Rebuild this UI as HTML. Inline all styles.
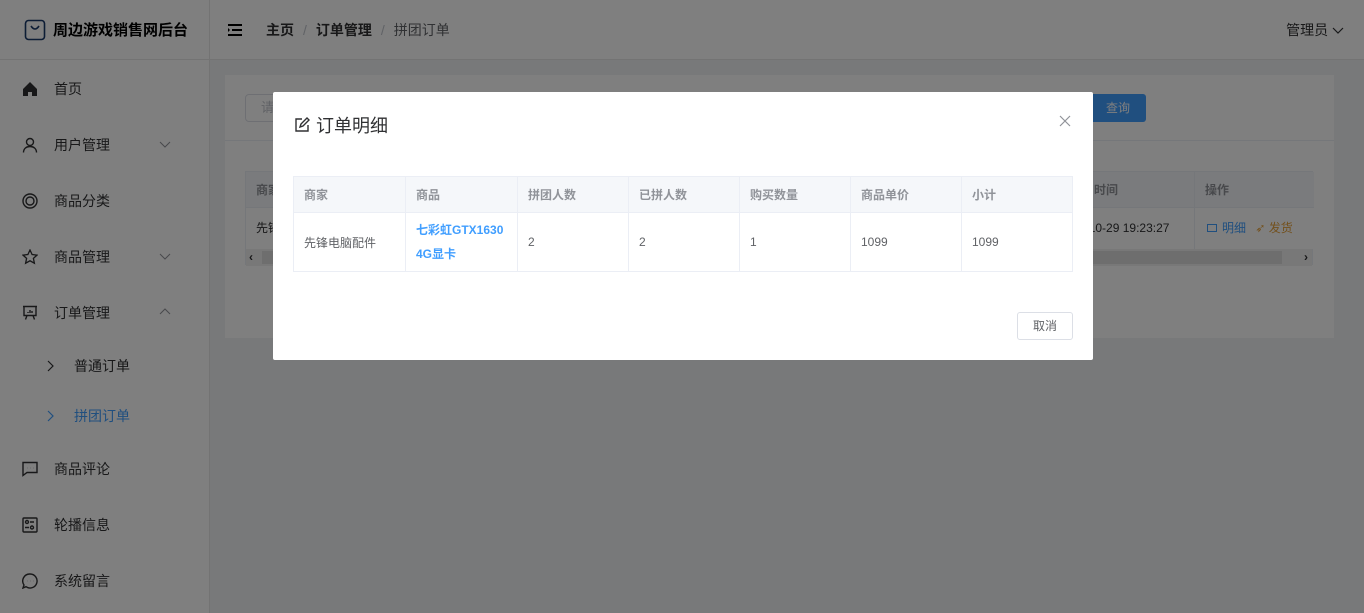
<!DOCTYPE html>
<html><head><meta charset="utf-8"><style>
*{box-sizing:border-box;margin:0;padding:0}
body{width:1364px;height:613px;overflow:hidden;font-family:"Liberation Sans","Noto Sans CJK SC",sans-serif;font-size:14px;color:#303133;background:#f0f2f5;position:relative}
.side{position:absolute;left:0;top:0;width:210px;height:613px;background:#fff;border-right:1px solid #e6e6e6}
.logo{height:60px;border-bottom:1px solid #e6e6e6;display:flex;align-items:center;padding-left:24px;font-weight:bold;font-size:15px;color:#000}
.item{position:absolute;left:0;width:209px;height:56px;display:flex;align-items:center;padding-left:22px;font-size:14px;color:#303133}
.item svg{margin-right:16px}
.arr{position:absolute;right:22px;top:22px}
.hdr{position:absolute;left:210px;top:0;right:0;height:60px;background:#fff;border-bottom:1px solid #e6e6e6;display:flex;align-items:center}
.card{position:absolute;left:225px;top:75px;width:1109px;height:263px;background:#fff}
.mask{position:absolute;left:0;top:0;width:1364px;height:613px;background:rgba(0,0,0,.5)}
.modal{position:absolute;left:273px;top:92px;width:820px;height:268px;background:#fff;border-radius:2px}
table{border-collapse:collapse;font-size:12px}
td,th{border:1px solid #ebeef5;text-align:left;padding:0 10px;font-weight:normal}
th{color:#909399;font-weight:bold;background:#f5f7fa}
</style></head><body>
<div class="side">
 <div class="logo"><svg width="22" height="22" viewBox="0 0 22 22" style="margin-right:7px"><rect x="1.5" y="1.5" width="19" height="19" rx="3" fill="none" stroke="#1a3a6b" stroke-width="1.6"/><path d="M7 7q4 6 8 0" fill="none" stroke="#1a3a6b" stroke-width="1.6"/></svg>周边游戏销售网后台</div>
 <div class="item" style="top:61px"><svg width="16" height="16" viewBox="0 0 16 16"><path d="M1 8L8 1l7 7v7h-5v-4H6v4H1z" fill="#303133"/></svg>首页</div>
 <div class="item" style="top:117px"><svg width="16" height="16" viewBox="0 0 16 16" fill="none" stroke="#303133" stroke-width="1.4"><circle cx="8" cy="5" r="3.5"/><path d="M1.5 15.5c0-4 3-6 6.5-6s6.5 2 6.5 6"/></svg>用户管理<svg class="arr" width="12" height="10" viewBox="0 0 12 10"><path d="M1 3l5 5 5-5" fill="none" stroke="#909399"/></svg></div>
 <div class="item" style="top:173px"><svg width="16" height="16" viewBox="0 0 16 16" fill="none" stroke="#303133" stroke-width="1.4"><circle cx="8" cy="8" r="7"/><circle cx="8" cy="8" r="4"/></svg>商品分类</div>
 <div class="item" style="top:229px"><svg width="16" height="16" viewBox="0 0 16 16" fill="none" stroke="#303133" stroke-width="1.3"><path d="M8 1l2.1 4.5 4.9.6-3.6 3.3 1 4.8L8 11.8 3.6 14.2l1-4.8L1 6.1l4.9-.6z"/></svg>商品管理<svg class="arr" width="12" height="10" viewBox="0 0 12 10"><path d="M1 3l5 5 5-5" fill="none" stroke="#909399"/></svg></div>
 <div class="item" style="top:285px"><svg width="16" height="16" viewBox="0 0 16 16" fill="none" stroke="#303133" stroke-width="1.4"><path d="M1 1.5h14M2 1.5v9h12v-9M5 10.5l-1.5 4M11 10.5l1.5 4M6 8V7M8 8V5M10 8V6"/></svg>订单管理<svg class="arr" width="12" height="10" viewBox="0 0 12 10"><path d="M1 7l5-5 5 5" fill="none" stroke="#909399"/></svg></div>
 <div class="item" style="top:338px;padding-left:46px"><svg width="8" height="12" viewBox="0 0 8 12" style="margin-right:20px"><path d="M2 1l5 5-5 5" fill="none" stroke="#303133" stroke-width="1.2"/></svg>普通订单</div>
 <div class="item" style="top:388px;padding-left:46px;color:#409eff"><svg width="8" height="12" viewBox="0 0 8 12" style="margin-right:20px"><path d="M2 1l5 5-5 5" fill="none" stroke="#409eff" stroke-width="1.2"/></svg>拼团订单</div>
 <div class="item" style="top:441px"><svg width="16" height="16" viewBox="0 0 16 16" fill="none" stroke="#303133" stroke-width="1.4"><path d="M1 1.5h14v10H5l-4 3z"/><path d="M5 7h.1M8 7h.1M11 7h.1" stroke-width="2"/></svg>商品评论</div>
 <div class="item" style="top:497px"><svg width="16" height="16" viewBox="0 0 16 16" fill="none" stroke="#303133" stroke-width="1.4"><rect x="1" y="1" width="14" height="14" rx="1"/><circle cx="5" cy="5" r="1.5"/><circle cx="10" cy="10.5" r="1.5"/><path d="M8 5h4M3 10.5h4"/></svg>轮播信息</div>
 <div class="item" style="top:553px"><svg width="16" height="16" viewBox="0 0 16 16" fill="none" stroke="#303133" stroke-width="1.4"><path d="M8 1a7 7 0 1 1-4 12.7L1 15l1-3A7 7 0 0 1 8 1z"/><path d="M5 8h.1M8 8h.1M11 8h.1" stroke-width="2"/></svg>系统留言</div>
</div>
<div class="hdr">
 <svg width="16" height="14" viewBox="0 0 16 14" style="margin-left:17px"><path d="M1 2h14M5 7h10M1 12h14" stroke="#000" stroke-width="2"/><path d="M1 5l2 2-2 2z" fill="#000"/></svg>
 <span style="margin-left:23px;font-weight:bold">主页</span><span style="color:#c0c4cc;margin:0 9px">/</span><span style="font-weight:bold">订单管理</span><span style="color:#c0c4cc;margin:0 9px">/</span><span style="color:#606266">拼团订单</span>
 <span style="position:absolute;right:20px;color:#303133">管理员 <svg width="12" height="10" viewBox="0 0 12 10"><path d="M1 3l5 5 5-5" fill="none" stroke="#303133" stroke-width="1.2"/></svg></span>
</div>
<div class="card">
 <div style="position:absolute;left:20px;top:19px;width:200px;height:28px;border:1px solid #dcdfe6;border-radius:4px;padding-left:15px;line-height:26px;color:#c0c4cc;font-size:13px">请输入</div>
 <div style="position:absolute;left:861px;top:19px;width:60px;height:28px;background:#409eff;border-radius:3px;color:#fff;font-size:12px;line-height:28px;padding-left:20px">查询</div>
 <div style="position:absolute;left:0;top:65px;width:1109px;border-top:1px solid #ebeef5"></div>
 <div style="position:absolute;left:20px;top:96px;width:1068px;height:94px;border:1px solid #ebeef5">
  <div style="height:36px;background:#f5f7fa;border-bottom:1px solid #ebeef5;font-size:12px;font-weight:bold;color:#909399;line-height:36px;padding-left:10px">商家<span style="position:absolute;left:848px">时间</span></div>
  <div style="height:41px;font-size:12px;line-height:41px;padding-left:10px">先锋<span style="position:absolute;left:812px">2022-10-29 19:23:27</span></div>
  <div style="height:17px;background:#f0f0f0;position:relative"><div style="position:absolute;left:16px;right:30px;top:2px;height:13px;background:#ddd"></div><span style="position:absolute;left:3px;top:0;font-size:12px;font-weight:bold;line-height:17px">‹</span><span style="position:absolute;right:4px;top:0;font-size:12px;font-weight:bold;line-height:17px">›</span></div>
  <div style="position:absolute;left:948px;top:0;width:120px;height:77px;border-left:1px solid #ebeef5;background:#fff;font-size:12px">
   <div style="height:36px;background:#f5f7fa;font-weight:bold;color:#909399;line-height:36px;padding-left:10px;border-bottom:1px solid #ebeef5">操作</div>
   <div style="line-height:41px;padding-left:12px;color:#409eff"><span style="display:inline-block;width:10px;height:8px;border:1px solid #409eff;margin-right:5px"></span>明细 <span style="color:#e6a23c;margin-left:6px">➶ 发货</span></div>
  </div>
 </div>
</div>
<div class="mask"></div>
<div class="modal">
 <div style="position:absolute;left:21px;top:20px;font-size:18px;color:#303133;display:flex;align-items:center"><svg width="16" height="16" viewBox="0 0 16 16" fill="none" stroke="#303133" stroke-width="1.4" style="margin-right:6px"><path d="M8 2H2v12h12V8"/><path d="M6 10l1-3 6-6 2 2-6 6z"/></svg>订单明细</div>
 <svg width="12" height="12" viewBox="0 0 12 12" style="position:absolute;left:786px;top:23px"><path d="M1 1l10 10M11 1L1 11" stroke="#909399" stroke-width="1.2"/></svg>
 <table style="position:absolute;left:20px;top:84px;width:780px">
  <tr style="height:36px"><th style="width:112px">商家</th><th style="width:112px">商品</th><th style="width:111px">拼团人数</th><th style="width:111px">已拼人数</th><th style="width:111px">购买数量</th><th style="width:111px">商品单价</th><th>小计</th></tr>
  <tr style="height:59px;color:#606266"><td>先锋电脑配件</td><td style="color:#409eff;font-weight:bold;line-height:24px">七彩虹GTX1630 4G显卡</td><td>2</td><td>2</td><td>1</td><td>1099</td><td>1099</td></tr>
 </table>
 <div style="position:absolute;left:744px;top:220px;width:56px;height:28px;border:1px solid #dcdfe6;border-radius:3px;font-size:12px;line-height:26px;text-align:center;color:#606266">取消</div>
</div>
</body></html>
